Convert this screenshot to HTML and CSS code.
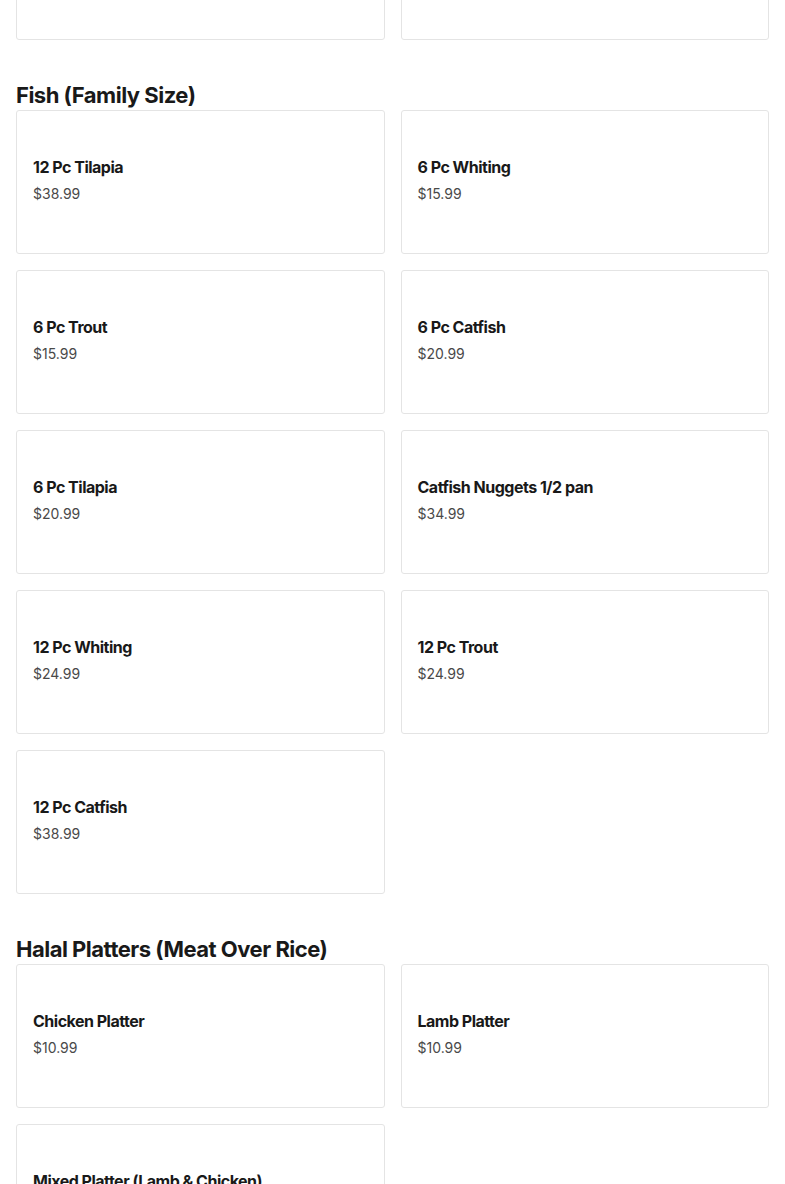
FILE: index.html
```html
<!DOCTYPE html>
<html>
<head>
<meta charset="utf-8">
<link rel="stylesheet" href="styles.css">
</head>
<body>
<div class="page">
  <section class="section">
    <div class="grid">
      <div class="card"><div class="name">&nbsp;</div><div class="price">&nbsp;</div></div>
      <div class="card"><div class="name">&nbsp;</div><div class="price">&nbsp;</div></div>
    </div>
  </section>
  <section class="section">
    <h2 class="heading">Fish (Family Size)</h2>
    <div class="grid">
      <div class="card"><div class="name">12 Pc Tilapia</div><div class="price">$38.99</div></div>
      <div class="card"><div class="name">6 Pc Whiting</div><div class="price">$15.99</div></div>
      <div class="card"><div class="name">6 Pc Trout</div><div class="price">$15.99</div></div>
      <div class="card"><div class="name">6 Pc Catfish</div><div class="price">$20.99</div></div>
      <div class="card"><div class="name">6 Pc Tilapia</div><div class="price">$20.99</div></div>
      <div class="card"><div class="name">Catfish Nuggets 1/2 pan</div><div class="price">$34.99</div></div>
      <div class="card"><div class="name">12 Pc Whiting</div><div class="price">$24.99</div></div>
      <div class="card"><div class="name">12 Pc Trout</div><div class="price">$24.99</div></div>
      <div class="card"><div class="name">12 Pc Catfish</div><div class="price">$38.99</div></div>
    </div>
  </section>
  <section class="section">
    <h2 class="heading">Halal Platters (Meat Over Rice)</h2>
    <div class="grid">
      <div class="card"><div class="name">Chicken Platter</div><div class="price">$10.99</div></div>
      <div class="card"><div class="name">Lamb Platter</div><div class="price">$10.99</div></div>
      <div class="card"><div class="name">Mixed Platter (Lamb &amp; Chicken)</div><div class="price">$11.99</div></div>
    </div>
  </section>
</div>
</body>
</html>
```

FILE: styles.css
```css
html, body {
  margin: 0;
  padding: 0;
  background: #ffffff;
  overflow: hidden;
}
body {
  font-family: "Inter", "Liberation Sans", sans-serif;
  color: #191919;
}
.page {
  margin-top: -104px;
  padding: 0 16px;
}
.section {
  margin-bottom: 41px;
}
.heading {
  margin: 0 0 1px 0;
  font-size: 22px;
  line-height: 28px;
  font-weight: 700;
  letter-spacing: -0.5px;
  color: #191919;
}
.grid {
  display: grid;
  grid-template-columns: 1fr 1fr;
  gap: 16px;
}
.card {
  box-sizing: border-box;
  height: 144px;
  border: 1px solid #e4e4e4;
  border-radius: 3px;
  padding: 44px 16px 0 16px;
}
.name {
  font-size: 16px;
  line-height: 24px;
  font-weight: 700;
  letter-spacing: -0.5px;
  color: #191919;
}
.price {
  margin-top: 5px;
  font-size: 14px;
  line-height: 20px;
  color: #494949;
}
```
